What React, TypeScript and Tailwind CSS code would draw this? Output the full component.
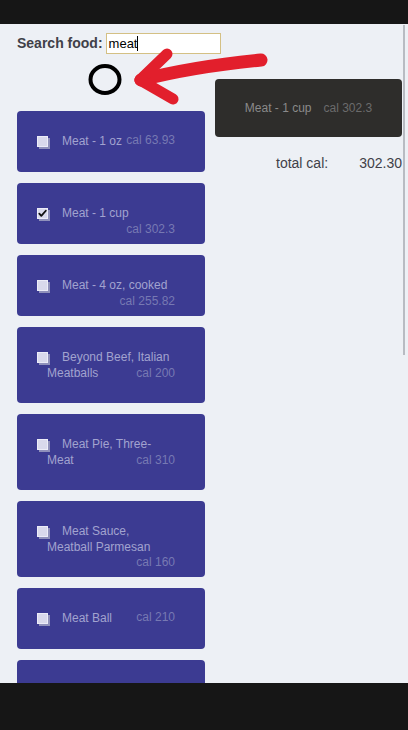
import React from "react";

type Food = { name: string; cal: string; checked?: boolean };

const foods: Food[] = [
  { name: "Meat - 1 oz", cal: "cal 63.93" },
  { name: "Meat - 1 cup", cal: "cal 302.3", checked: true },
  { name: "Meat - 4 oz, cooked", cal: "cal 255.82" },
  { name: "Beyond Beef, Italian Meatballs", cal: "cal 200" },
  { name: "Meat Pie, Three-Meat", cal: "cal 310" },
  { name: "Meat Sauce, Meatball Parmesan", cal: "cal 160" },
  { name: "Meat Ball", cal: "cal 210" },
];

function Checkbox({ checked }: { checked?: boolean }) {
  return (
    <span className="relative inline-block -ml-[10px] mr-[14px] my-[3px] w-[11px] h-[11px] align-middle bg-[#d9d9ec] border border-[#ececf8] shadow-[2px_2px_0_0_#8f90bb]">
      {checked && (
        <svg viewBox="0 0 12 12" className="absolute -left-[1px] -top-[1px] w-[11px] h-[11px]">
          <path d="M2.5 6.2l2.2 2.4L9.6 3" fill="none" stroke="#111" strokeWidth="2" strokeLinecap="round" strokeLinejoin="round" />
        </svg>
      )}
    </span>
  );
}

function FoodCard({ food }: { food: Food }) {
  return (
    <div className="bg-[#3c3b92] rounded-[4px] pt-[22px] pb-[22px] px-[30px] text-[12px] leading-[15px] text-[#a2a3cf]">
      <Checkbox checked={food.checked} />
      {food.name}
      <span className="float-right text-[#7779b3]">{food.cal}</span>
    </div>
  );
}

export default function App() {
  return (
    <div className="w-[408px] h-[730px] flex flex-col font-['Liberation_Sans',Arial,sans-serif] bg-[#161616]">
      <div className="h-[24px] shrink-0 bg-[#161616]" />

      <div className="relative flex-1 overflow-hidden bg-[#edf0f5]">
        {/* scrollbar */}
        <div className="absolute right-[3px] top-[1px] w-[2px] h-[330px] bg-[#b8bbc2]" />

        {/* red annotation arrow */}
        <svg className="absolute left-0 top-0 z-10" width="408" height="110" viewBox="0 0 408 110">
          <g fill="none" stroke="#e21f2c" strokeLinecap="round" strokeLinejoin="round">
            <path d="M261 36 C 220 40, 180 46, 141 56" strokeWidth="13" />
            <path d="M140 56 L 167 30" strokeWidth="11" />
            <path d="M140 56 L 173 75" strokeWidth="11" />
          </g>
        </svg>

        <div className="pl-[17px] pt-[9px]">
          <div className="flex items-center gap-[3px]">
            <span className="text-[14px] font-bold text-[#404048]">Search food:</span>
            <div className="w-[115px] h-[21px] border border-[#d4c084] bg-white px-[2px] flex items-center text-[13px] text-black">
              meat
              <span className="inline-block w-[1px] h-[15px] bg-black" />
            </div>
          </div>

          <div className="flex gap-[10px] mt-[9px]">
            <div className="w-[188px] shrink-0">
              <svg className="ml-[71px]" width="36" height="32" viewBox="0 0 36 32">
                <ellipse cx="17" cy="16.5" rx="14.5" ry="13.5" fill="none" stroke="#000" strokeWidth="4" />
              </svg>
              <div className="mt-[16px] space-y-[11px]">
                {foods.map((f, i) => (
                  <FoodCard key={i} food={f} />
                ))}
                <div className="h-[61px] bg-[#3c3b92] rounded-[4px]" />
              </div>
            </div>

            <div className="w-[187px] shrink-0 pt-[16px]">
              <div className="h-[58px] rounded-[4px] bg-[#2e2d2b] flex items-center justify-center text-[12px]">
                <span className="text-[#8a8a8a]">Meat - 1 cup</span>
                <span className="ml-[12px] text-[#6b6b6b]">cal 302.3</span>
              </div>
              <div className="mt-[16px] pl-[61px] flex justify-between text-[14px] text-[#404048]">
                <span>total cal:</span>
                <span>302.30</span>
              </div>
            </div>
          </div>
        </div>
      </div>

      <div className="h-[47px] shrink-0 bg-[#161616]" />
    </div>
  );
}
